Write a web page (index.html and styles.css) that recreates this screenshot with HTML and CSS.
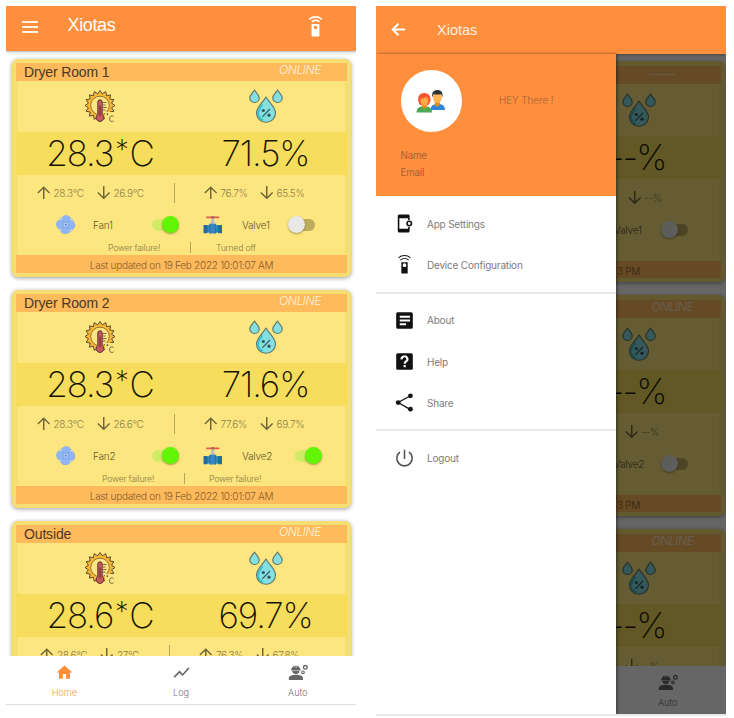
FILE: index.html
```html
<!DOCTYPE html>
<html lang="en">
<head>
<meta charset="utf-8">
<title>Xiotas</title>
<link rel="stylesheet" href="styles.css">
</head>
<body>
<svg class="defs" aria-hidden="true">
  <symbol id="heat" viewBox="0 0 34 34">
    <g transform="translate(16 16.5)">
      <polygon fill="#f7b731" stroke="#5b4a33" stroke-width="1" stroke-linejoin="round" points="15,0 11.6,2.3 13.9,5.7 9.8,6.6 10.6,10.6 6.6,9.8 5.7,13.9 2.3,11.6 0,15 -2.3,11.6 -5.7,13.9 -6.6,9.8 -10.6,10.6 -9.8,6.6 -13.9,5.7 -11.6,2.3 -15,0 -11.6,-2.3 -13.9,-5.7 -9.8,-6.6 -10.6,-10.6 -6.6,-9.8 -5.7,-13.9 -2.3,-11.6 0,-15 2.3,-11.6 5.7,-13.9 6.6,-9.8 10.6,-10.6 9.8,-6.6 13.9,-5.7 11.6,-2.3"/>
      <circle r="9.3" fill="#fde681" stroke="#7a6033" stroke-width=".8"/>
      <path d="M5 6.500H17V17H5z" fill="#fde681"/>
      <path d="M3 -3H6.500M3 -.5H5.500M3 2H6.500M3 4.500H5.500" stroke="#5b4a33" stroke-width=".8"/>
      <path d="M-2.200 -3.500a2.200 2.200 0 0 1 4.400 0V9a3.800 3.800 0 1 1 -4.400 0z" fill="#c85a5e" stroke="#5c3335" stroke-width="1"/>
      <path d="M0 0V11" stroke="#7c3038" stroke-width="1.200"/>
      <circle cx="7.400" cy="8.600" r=".9" fill="#4f4936"/>
      <path d="M13.600 11.200a2.200 2.200 0 0 0-3.900 1v2a2.200 2.200 0 0 0 3.900 1" fill="none" stroke="#4f4936" stroke-width=".8"/>
    </g>
  </symbol>
  <symbol id="drops" viewBox="0 0 34 34">
    <g stroke="#5f7468" stroke-width="1.100" stroke-linejoin="round" fill="#84dfe0">
      <path d="M5.500 1C7.200 4 10.200 6 10.200 9a4.700 4.500 0 0 1-9.400 0C.8 6 3.800 4 5.500 1z"/>
      <path d="M28.500 1c1.700 3 4.700 5 4.700 8a4.700 4.500 0 0 1-9.400 0c0-3 3-5 4.700-8z"/>
      <path d="M17 8c3 5.500 9.500 10 9.500 16a9.500 9.300 0 0 1-19 0c0-6 6.500-10.500 9.500-16z"/>
    </g>
    <path fill="none" stroke="#35bfc9" stroke-width="1.800" d="M13.500 15.500c-3 4-4.700 6-4.500 9.500a7.800 7.800 0 0 0 5 6.200"/>
    <path d="M13.300 27.800 21 20" stroke="#35565e" stroke-width="1.100"/>
    <circle cx="14.300" cy="21.500" r="1.600" fill="#35565e"/><circle cx="20" cy="26.200" r="1.600" fill="#35565e"/>
  </symbol>
  <symbol id="up" viewBox="0 0 14 14"><path d="M7 14V1.200M.9 7.300 7 1.200l6.100 6.100" fill="none" stroke="currentColor" stroke-width="1.500"/></symbol>
  <symbol id="down" viewBox="0 0 14 14"><path d="M7 0V12.800M.9 6.700 7 12.800l6.100-6.100" fill="none" stroke="currentColor" stroke-width="1.500"/></symbol>
  <symbol id="fan" viewBox="0 0 20 20">
    <circle cx="10" cy="10" r="8.800" fill="#c9dbd0" stroke="#9db6e0" stroke-width=".6"/>
    <g fill="#8fb5f6" stroke="#7ba3e4" stroke-width=".5">
      <path d="M9 9.500C4.500 7.500 5.500.5 10.500.5c4.500 0 5.200 4.500 1.500 8.500z"/>
      <path d="M10.500 9c2-4.500 9-3.500 9 1.500 0 4.500-4.500 5.200-8.500 1.500z"/>
      <path d="M11 10.500c4.500 2 3.500 9-1.500 9-4.500 0-5.200-4.500-1.500-8.500z"/>
      <path d="M9.500 11c-2 4.500-9 3.500-9-1.500C.5 5 5 4.300 9 8z"/>
    </g>
    <circle cx="10" cy="10" r="2.800" fill="#b4d0fc" stroke="#6d95dc" stroke-width=".7"/><circle cx="10" cy="10" r=".9" fill="#4c78cc"/>
  </symbol>
  <symbol id="valve" viewBox="0 0 20 20">
    <path d="M4 2.400h12" stroke="#e85b45" stroke-width="1.900" stroke-linecap="round"/>
    <path d="M10 1V4" stroke="#a46a66" stroke-width="2.500"/>
    <path d="M9 3.500h2l1.300 6H7.700z" fill="#b8bcc4"/>
    <path d="M2 10.500h16v7.500H2z" fill="#2f7cb5"/>
    <path d="M6.500 9h7l1.200 5-1.200 5h-7l-1.200-5z" fill="#3a88c3"/>
    <path d="M.5 10.300h4v8.500h-4zM15.500 10.300h4v8.500h-4z" fill="#286ea6"/>
    <path d="M7.300 10v9M12.700 10v9M2.500 10.500v8M17.500 10.500v8" stroke="#225f92" stroke-width=".7"/>
  </symbol>
  <symbol id="remote" viewBox="0 0 24 24"><path fill="currentColor" d="M15.500 9h-7c-.55 0-1 .45-1 1v12.500c0 .55.45 1 1 1h7c.55 0 1-.45 1-1V10c0-.55-.45-1-1-1zM12 15c-1.100 0-2-.9-2-2s.9-2 2-2 2 .9 2 2-.9 2-2 2zM7.050 6.050l1.410 1.410C9.370 6.560 10.620 6 12 6s2.630.56 3.540 1.460l1.410-1.410C15.680 4.780 13.930 4 12 4s-3.680.78-4.950 2.050zM12 0C8.960 0 6.210 1.230 4.220 3.220l1.410 1.410C7.260 3.010 9.510 2 12 2s4.740 1.010 6.360 2.640l1.410-1.410C17.790 1.230 15.040 0 12 0z"/></symbol>
  <symbol id="device" viewBox="0 0 24 24"><path fill="none" stroke="currentColor" stroke-width="1.300" d="M4.500 3.500c4-3.700 11-3.700 15 0M6.800 6.500c3-2.700 7.400-2.700 10.400 0"/><path fill="currentColor" d="M8 9h8v14.500H8zM12 10.500a2.400 2.400 0 1 0 0 4.800 2.400 2.400 0 0 0 0-4.800z" fill-rule="evenodd"/></symbol>
  <symbol id="home" viewBox="0 0 24 24"><path fill="currentColor" d="M10 20v-6h4v6h5v-8h3L12 3 2 12h3v8z"/></symbol>
  <symbol id="log" viewBox="0 0 24 24"><path fill="currentColor" d="M3.500 18.490l6-6.010 4 4L22 6.920l-1.410-1.410-7.090 7.970-4-4L2 16.990z"/></symbol>
  <symbol id="auto" viewBox="0 0 24 20">
    <path fill="currentColor" d="M1 19v-2.300C1 14 5.500 12.700 9.500 12.700S18 14 18 16.700V19zM4.200 6.200C4.400 3.800 6 2.200 8 1.800V4h.8V1.500h1.400V4h.8V1.800c2 .4 3.400 2 3.600 4.400h.6v1.300H3.600V6.200zM5.200 8.300h8.400a4.200 3.500 0 0 1-8.400 0z"/>
    <circle cx="20.800" cy="3.800" r="2.200" fill="none" stroke="currentColor" stroke-width="1.600"/>
    <circle cx="18" cy="9.700" r="1.600" fill="none" stroke="currentColor" stroke-width="1.300"/>
  </symbol>
  <symbol id="back" viewBox="0 0 16 16"><path d="M15 8H2M8 1.800 1.800 8 8 14.200" fill="none" stroke="currentColor" stroke-width="2.200"/></symbol>
  <symbol id="settings" viewBox="0 0 24 24"><path fill="currentColor" fill-rule="evenodd" d="M5.500.5h11c1.100 0 2 .9 2 2v5h-2V5.500h-11v13h11v-2h2v5c0 1.100-.9 2-2 2h-11c-1.100 0-2-.9-2-2v-19c0-1.100.9-2 2-2z"/><circle cx="18" cy="12" r="2.800" fill="none" stroke="currentColor" stroke-width="2"/></symbol>
  <symbol id="about" viewBox="0 0 24 24"><path fill="currentColor" fill-rule="evenodd" d="M3.500 1.500h17a2 2 0 0 1 2 2v17a2 2 0 0 1-2 2h-17a2 2 0 0 1-2-2v-17c0-1.100.9-2 2-2zM6 6v2.500h13V6zm0 4.700v2.500h13v-2.500zm0 4.700v2.500h8v-2.500z"/></symbol>
  <symbol id="help" viewBox="0 0 24 24"><rect x="1.500" y="1.500" width="21" height="21" rx="2" fill="currentColor"/><path d="M8.300 9.300a3.700 3.500 0 1 1 5.700 2.600c-1.200.9-1.800 1.400-1.800 2.900M12.200 16.500v2.700" fill="none" stroke="#fff" stroke-width="2.700"/></symbol>
  <symbol id="share" viewBox="0 0 24 24"><path d="M19.500 3.500 4 12l15.500 9" fill="none" stroke="currentColor" stroke-width="1.600"/><g fill="currentColor"><circle cx="19.500" cy="3.500" r="3"/><circle cx="4" cy="12" r="3"/><circle cx="19.500" cy="20.500" r="3"/></g></symbol>
  <symbol id="power" viewBox="0 0 24 24"><path d="M12 1v11.500M6.300 3.800a9.700 9.700 0 1 0 11.400 0" fill="none" stroke="currentColor" stroke-width="2"/></symbol>
  <symbol id="people" viewBox="0 0 30 24">
    <path d="M14.500 21c0-4.500 3-6 7.300-6s7.200 1.500 7.200 6z" fill="#2f86dd"/><path d="M18.800 12h5v4l-2.500 2-2.500-2z" fill="#e58a16"/>
    <ellipse cx="21.300" cy="8.500" rx="4.300" ry="5.500" fill="#ffb454"/><path d="M16.400 8.500c-1.200-5 1.600-7.400 5-7.400s6.200 2.400 4.900 7.400l-1-3.300c-2.500.5-5 .5-7.900 0z" fill="#2d3438"/>
    <path d="M2.500 13C1 7 4.200 4 8.200 4s7.400 3 6 9l-2 3H4z" fill="#ff5530"/>
    <path d="M.5 23.500c0-4.500 3-6.200 7.800-6.200s7.700 1.700 7.700 6.200z" fill="#4fa854"/><path d="M5.800 15h5v3.300l-2.500 1.500-2.500-1.500z" fill="#ef8b19"/>
    <path d="M4.500 10c3-.4 4.500-1.300 5.500-2.500.6 1.200 1.300 1.900 2.300 2.300 0 4-1.500 6.700-3.900 6.700S4.500 14 4.500 10z" fill="#ffad48"/>
  </symbol>
</svg>

<main class="stage">
  <section class="phone phone-home">
    <header class="appbar">
      <span class="burger"><i></i><i></i><i></i></span>
      <h1>Xiotas</h1>
      <svg class="appbar-remote"><use href="#remote"/></svg>
    </header>
    <div class="feed">
      <article class="card">
        <div class="card-head"><span>Dryer Room 1</span><em>ONLINE</em></div>
        <div class="pair icons"><svg><use href="#heat"/></svg><svg><use href="#drops"/></svg></div>
        <div class="pair values"><b>28.3<span class="star">*</span>C</b><b class="pct">71.5%</b></div>
        <div class="details">
          <div class="stats"><svg><use href="#up"/></svg><span>28.3°C</span><svg><use href="#down"/></svg><span>26.9°C</span><i class="rule"></i><svg><use href="#up"/></svg><span>76.7%</span><svg><use href="#down"/></svg><span>65.5%</span></div>
          <div class="devices"><svg><use href="#fan"/></svg><span>Fan1</span><i class="switch on"></i><svg><use href="#valve"/></svg><span>Valve1</span><i class="switch"></i></div>
          <div class="status"><span>Power failure!</span><i class="rule"></i><span class="off">Turned off</span></div>
        </div>
        <div class="card-foot">Last updated on 19 Feb 2022 10:01:07 AM</div>
      </article>
      <article class="card">
        <div class="card-head"><span>Dryer Room 2</span><em>ONLINE</em></div>
        <div class="pair icons"><svg><use href="#heat"/></svg><svg><use href="#drops"/></svg></div>
        <div class="pair values"><b>28.3<span class="star">*</span>C</b><b class="pct">71.6%</b></div>
        <div class="details">
          <div class="stats"><svg><use href="#up"/></svg><span>28.3°C</span><svg><use href="#down"/></svg><span>26.6°C</span><i class="rule"></i><svg><use href="#up"/></svg><span>77.6%</span><svg><use href="#down"/></svg><span>69.7%</span></div>
          <div class="devices"><svg><use href="#fan"/></svg><span>Fan2</span><i class="switch on"></i><svg><use href="#valve"/></svg><span>Valve2</span><i class="switch on last"></i></div>
          <div class="status status-wide"><span>Power failure!</span><i class="rule"></i><span>Power failure!</span></div>
        </div>
        <div class="card-foot">Last updated on 19 Feb 2022 10:01:07 AM</div>
      </article>
      <article class="card">
        <div class="card-head"><span>Outside</span><em>ONLINE</em></div>
        <div class="pair icons"><svg><use href="#heat"/></svg><svg><use href="#drops"/></svg></div>
        <div class="pair values"><b>28.6<span class="star">*</span>C</b><b class="pct">69.7%</b></div>
        <div class="details">
          <div class="stats stats-narrow"><svg><use href="#up"/></svg><span>28.6°C</span><svg><use href="#down"/></svg><span>27°C</span><i class="rule"></i><svg><use href="#up"/></svg><span>76.3%</span><svg><use href="#down"/></svg><span>67.8%</span></div>
        </div>
      </article>
    </div>
    <nav class="tabs">
      <a class="active"><svg><use href="#home"/></svg>Home</a>
      <a><svg><use href="#log"/></svg>Log</a>
      <a><svg class="wide"><use href="#auto"/></svg>Auto</a>
    </nav>
  </section>

  <section class="phone phone-menu">
    <header class="appbar">
      <svg class="back"><use href="#back"/></svg>
      <h1>Xiotas</h1>
    </header>
    <div class="screen">
      <div class="feed">
        <article class="card">
          <div class="card-head"><span></span><em class="blank">------</em></div>
          <div class="pair icons"><span></span><svg><use href="#drops"/></svg></div>
          <div class="pair values"><span></span><b>--%</b></div>
          <div class="details">
            <div class="stats stats-half"><svg><use href="#down"/></svg><span>--%</span></div>
            <div class="devices devices-half"><span>Valve1</span><i class="switch"></i></div>
          </div>
          <div class="card-foot">3 PM</div>
        </article>
        <article class="card">
          <div class="card-head"><span></span><em>ONLINE</em></div>
          <div class="pair icons"><span></span><svg><use href="#drops"/></svg></div>
          <div class="pair values"><span></span><b>--%</b></div>
          <div class="details">
            <div class="stats stats-half stats-second"><svg><use href="#down"/></svg><span>--%</span></div>
            <div class="devices devices-half"><span>Valve2</span><i class="switch"></i></div>
          </div>
          <div class="card-foot">3 PM</div>
        </article>
        <article class="card">
          <div class="card-head"><span></span><em>ONLINE</em></div>
          <div class="pair icons"><span></span><svg><use href="#drops"/></svg></div>
          <div class="pair values"><span></span><b>--%</b></div>
          <div class="details">
            <div class="stats stats-half stats-second"><svg><use href="#down"/></svg><span>--%</span></div>
          </div>
        </article>
      </div>
      <nav class="tabs"><a></a><a></a><a><svg class="wide"><use href="#auto"/></svg>Auto</a></nav>
      <div class="scrim"></div>
      <aside class="drawer">
        <div class="profile">
          <div class="who"><div class="avatar"><svg><use href="#people"/></svg></div><span>HEY There !</span></div>
          <p>Name</p>
          <p>Email</p>
        </div>
        <ul><li><svg><use href="#settings"/></svg>App Settings</li><li><svg><use href="#device"/></svg>Device Configuration</li></ul>
        <ul><li><svg><use href="#about"/></svg>About</li><li><svg><use href="#help"/></svg>Help</li><li><svg><use href="#share"/></svg>Share</li></ul>
        <ul><li><svg class="thin"><use href="#power"/></svg>Logout</li></ul>
      </aside>
    </div>
  </section>
</main>
</body>
</html>
```
FILE: styles.css
```css
* { box-sizing: border-box; }
body { margin: 0; background: #fff; font-family: Inter, "Liberation Sans", sans-serif; color: #111; overflow: hidden; }
svg { display: block; flex: none; }
.defs { width: 0; height: 0; position: absolute; }
h1, p, ul { margin: 0; padding: 0; font-weight: 400; }
ul { list-style: none; }
i { font-style: normal; }

.stage { display: flex; gap: 20px; padding: 6px; height: 718px; align-items: flex-start; }
.phone { width: 350px; display: flex; flex-direction: column; background: #fff; overflow: hidden; }
.phone-home { height: 699px; border-bottom: 1px solid #ddd; }
.phone-menu { height: 710px; border-bottom: 2px solid #e8e8e8; }

.appbar { flex: none; display: flex; background: #ff8f3c; color: #fff; height: 44.5px; position: relative; z-index: 2; box-shadow: 0 1px 3px rgba(0,0,0,.3); font-family: "Liberation Sans", sans-serif; }
.appbar h1 { font-size: 18px; line-height: 20px; letter-spacing: -.35px; padding: 9px 0 0 29.5px; flex: 1; }
.burger { display: flex; flex-direction: column; gap: 3px; padding: 15px 0 0 15.500px; }
.burger i { width: 16.500px; height: 2px; background: #fff3e8; }
.appbar-remote { width: 21px; height: 21px; margin: 9.500px 30.500px 0 0; }
.phone-menu .appbar { height: 48px; }
.back { width: 15px; height: 15px; margin: 16px 0 0 15px; }
.phone-menu h1 { font-size: 14.500px; letter-spacing: 0; padding: 14px 0 0 31px; color: #ffeee0; }

.feed { flex: 1; min-height: 0; overflow: hidden; padding: 8px 5px 0 6px; display: flex; flex-direction: column; gap: 13px; }
.card { flex: none; height: 218px; padding: 4px; border-radius: 6px; background: #f5df74; box-shadow: 0 1px 4px rgba(0,0,0,.4); display: flex; flex-direction: column; }
.card-head { flex: none; height: 18px; background: #ffba5c; display: flex; justify-content: space-between; align-items: center; padding: 0 26px 0 8px; font: 14px/18px "Liberation Sans", sans-serif; letter-spacing: -.15px; color: #4a3825; }
.card-head em { color: #fff3dc; font-size: 12px; letter-spacing: -.4px; font-family: Inter, sans-serif; font-weight: 300; margin-top: -3px; }
.pair { flex: none; display: grid; grid-template-columns: 168px 1fr; justify-items: center; align-items: center; }
.icons { height: 51px; margin: 0 2px; grid-template-columns: 166px 1fr; background: #fde67f; }
.icons svg { width: 34px; height: 34px; }
.icons svg:last-child { margin-left: 3px; }
.values { height: 43px; background: #f6dd5c; }
.values b { font-weight: 200; font-size: 35px; line-height: 42px; letter-spacing: -1.100px; color: #151200; white-space: nowrap; }
.star { display: inline-block; font-size: 27px; line-height: 20px; vertical-align: 7px; width: 16px; text-align: center; }
.details { flex: 1; background: #fde67f; margin: 0 2px; display: flex; flex-direction: column; min-height: 0; }
.stats { flex: none; height: 36px; display: grid; align-items: center; grid-template-columns: 17px 43px 17px 60px 30px 17px 39.500px 16.500px 1fr; padding-left: 18.500px; color: #8d8149; font-size: 10px; letter-spacing: -.35px; font-weight: 300; white-space: nowrap; }
.stats svg { width: 13.500px; height: 13.500px; color: #70663a; }
.rule { width: 1px; height: 20px; background: #b3a55e; }
.stats-narrow { grid-template-columns: 17px 43px 17px 52px 30px 17px 39.500px 17px 1fr; padding-left: 22px; }
.devices { flex: none; height: 28px; display: grid; align-items: center; grid-template-columns: 37px 58px 52px 39px 46px 1fr; padding-left: 38px; font-size: 10px; letter-spacing: -.2px; font-weight: 300; color: #5e5533; }
.devices svg { width: 19.500px; height: 19.500px; }
.switch { display: flex; align-items: center; width: 18px; height: 12px; border-radius: 6px; background: #bcac5c; margin-left: 9px; }
.switch::before { content: ""; flex: none; width: 17px; height: 17px; border-radius: 50%; background: #e9e8e6; margin-left: -9px; box-shadow: 0 1px 2px rgba(80,70,20,.5); }
.switch.on { background: #d0eb66; margin-left: 1px; }
.switch.on::before { background: #62f606; margin-left: 9.500px; }
.switch.last { margin-left: 7px; }
.status { flex: 1; display: grid; align-items: center; grid-template-columns: 81.500px 26.500px 1fr; padding: 2px 0 0 90px; color: #867a45; font-size: 8.700px; letter-spacing: -.22px; font-weight: 300; }
.status .rule { height: 11px; }
.status-wide { padding-left: 84px; grid-template-columns: 81.500px 25.500px 1fr; }
.card-foot { flex: none; height: 17.500px; line-height: 20.500px; background: #ffba5c; text-align: center; font-size: 10px; letter-spacing: -.27px; font-weight: 300; color: #835c2c; overflow: hidden; }

.tabs { flex: none; height: 48.500px; background: #fff; display: grid; grid-template-columns: repeat(3, 116.700px); position: relative; z-index: 1; }
.tabs a { display: flex; flex-direction: column; align-items: center; gap: 4px; padding-top: 7px; font-size: 9.200px; line-height: 14px; font-weight: 300; color: #777; letter-spacing: -.1px; }
.tabs svg { width: 19px; height: 19px; color: #666; }
.tabs svg.wide { width: 20px; height: 17px; margin: 1px 0; }
.tabs .active { color: #eda05e; }
.tabs .active svg { color: #ff8f3c; }

.screen { flex: 1; min-height: 0; display: flex; flex-direction: column; position: relative; }
.screen .feed { padding: 7px 1.500px 0 9px; }
.screen .card { height: 221px; padding: 4.500px 4px 4px; }
.screen .icons { height: 52px; }
.screen .values { height: 43.500px; }
.screen .values b { letter-spacing: -1.800px; margin-right: 3px; }
.screen .card-head { padding-right: 27px; }
.screen .card-head .blank { margin: -2px 19px 0 0; letter-spacing: -1.200px; }
.stats-half { grid-template-columns: 17px 1fr; padding-left: 236.500px; height: 38px; }
.stats-second { padding-left: 233.500px; }
.devices-half { grid-template-columns: 47px 1fr; padding-left: 223px; height: 25px; }
.screen .card-foot { text-align: left; padding-left: 228px; }
.scrim { position: absolute; inset: 0; background: rgba(0,0,0,.6); z-index: 2; }
.drawer { position: absolute; top: 0; bottom: 0; left: 0; width: 240px; background: #fff; z-index: 3; box-shadow: 1px 0 3px rgba(0,0,0,.5); font-size: 10px; letter-spacing: -.2px; color: #7c7c7c; font-weight: 300; }
.profile { height: 141.500px; background: #ff8f3c; padding: 16px 0 0 24.500px; color: #a1623a; font-size: 9.800px; line-height: 17px; }
.who { display: flex; align-items: center; gap: 37px; margin-bottom: 15.500px; letter-spacing: 0; }
.avatar { width: 61.500px; height: 61.500px; border-radius: 50%; background: #fff; display: grid; place-items: center; }
.avatar svg { width: 30px; height: 24px; }
.drawer ul { padding: 6px 0; border-bottom: 2px solid #e8e8e8; }
.drawer .profile + ul { padding-top: 7.500px; }
.drawer ul:last-child { border: 0; }
.drawer li { height: 41.300px; display: flex; align-items: center; gap: 13px; padding-left: 19px; }
.drawer li svg { width: 19px; height: 19px; color: #111; }
.drawer li svg.thin { color: #555; }
```
